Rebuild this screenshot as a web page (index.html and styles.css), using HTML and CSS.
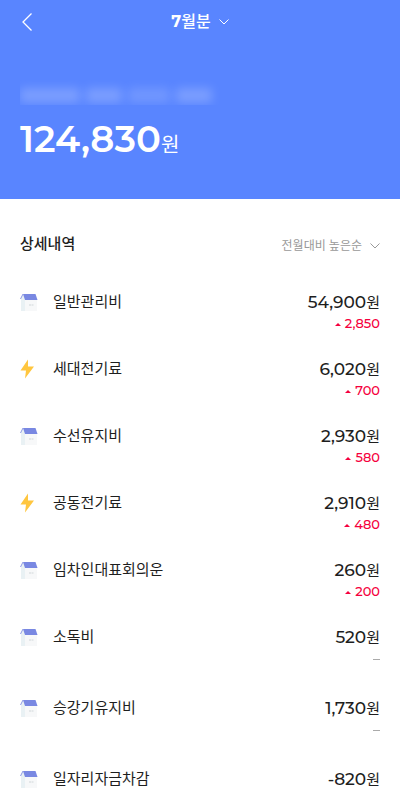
FILE: index.html
```html
<!DOCTYPE html>
<html lang="ko">
<head>
<meta charset="utf-8">
<meta name="viewport" content="width=device-width, initial-scale=1">
<title>7월분 관리비</title>
<link rel="stylesheet" href="styles.css">
</head>
<body>
<svg class="symbols" aria-hidden="true">
  <symbol id="house" viewBox="0 0 18 18">
    <path d="M1 5 3 1 5 5V18H1Z" fill="#e9f1f4"/>
    <path d="M5 5H17V18H5Z" fill="#f7f8f9"/>
    <path d="M3 1H15.500L17.500 7H5Z" fill="#7988e2"/>
    <path d="M3 1 0.500 6" stroke="#8f9be5" stroke-width="1" fill="none"/>
    <path d="M9 11H11V13H9ZM11.500 11H13.500V13H11.500Z" fill="#e4e7e9"/>
  </symbol>
  <symbol id="bolt" viewBox="0 0 18 20">
    <path d="M8 0.500 0.500 11.500H6L5 19.500 14 7.500H8Z" fill="#ffc63f"/>
  </symbol>
  <symbol id="chevron" viewBox="0 0 10 6">
    <path d="M0.500 0.500 5 5 9.500 0.500" fill="none" stroke="currentColor"/>
  </symbol>
</svg>
<header class="summary">
  <div class="topbar">
    <button class="back" type="button" aria-label="뒤로">
      <svg viewBox="0 0 10 18"><path d="M9.500 0.500 1 9 9.500 17.500" fill="none" stroke="currentColor" stroke-width="1.300"/></svg>
    </button>
    <button class="month" type="button"><span>7<span class="month-unit">월분</span></span> <svg class="chevron"><use href="#chevron"/></svg></button>
  </div>
  <div class="address" aria-hidden="true">
    <span class="smudge wide"></span><span class="smudge"></span><span class="smudge faint"></span><span class="smudge"></span>
  </div>
  <p class="total">124,830<span class="total-unit">원</span></p>
</header>
<main class="details">
  <div class="details-head">
    <h1 class="title">상세내역</h1>
    <button class="sort" type="button">전월대비 높은순 <svg class="chevron"><use href="#chevron"/></svg></button>
  </div>
  <ul class="list">
    <li class="item"><svg class="icon"><use href="#house"/></svg><span class="name">일반관리비</span><span class="amount">54,900<span class="won">원</span></span><span class="change">2,850</span></li>
    <li class="item"><svg class="icon bolt"><use href="#bolt"/></svg><span class="name">세대전기료</span><span class="amount">6,020<span class="won">원</span></span><span class="change">700</span></li>
    <li class="item"><svg class="icon"><use href="#house"/></svg><span class="name">수선유지비</span><span class="amount">2,930<span class="won">원</span></span><span class="change">580</span></li>
    <li class="item"><svg class="icon bolt"><use href="#bolt"/></svg><span class="name">공동전기료</span><span class="amount">2,910<span class="won">원</span></span><span class="change">480</span></li>
    <li class="item"><svg class="icon"><use href="#house"/></svg><span class="name">임차인대표회의운</span><span class="amount">260<span class="won">원</span></span><span class="change">200</span></li>
    <li class="item"><svg class="icon"><use href="#house"/></svg><span class="name">소독비</span><span class="amount">520<span class="won">원</span></span><span class="same"></span></li>
    <li class="item"><svg class="icon"><use href="#house"/></svg><span class="name">승강기유지비</span><span class="amount">1,730<span class="won">원</span></span><span class="same"></span></li>
    <li class="item"><svg class="icon"><use href="#house"/></svg><span class="name">일자리자금차감</span><span class="amount">-820<span class="won">원</span></span></li>
  </ul>
</main>
</body>
</html>
```
FILE: styles.css
```css
* {
  box-sizing: border-box;
}

body {
  margin: 0;
  background: #fff;
  color: #1e1e1e;
  font-family: Montserrat, Inter, "Noto Sans CJK KR", sans-serif;
}

button {
  border: 0;
  padding: 0;
  background: none;
  font: inherit;
}

.symbols {
  display: none;
}

.summary {
  padding: 0 20px 37px;
  background: #5985ff;
  color: #fff;
}

.topbar {
  display: grid;
  grid-template-columns: 20px 1fr 20px;
  align-items: center;
  height: 44px;
}

.back {
  height: 44px;
  color: #fff;
}

.back svg {
  display: block;
  width: 14px;
  height: 18px;
}

.month {
  display: flex;
  align-items: center;
  justify-content: center;
  gap: 8px;
  height: 44px;
  color: #fff;
  font-size: 16px;
  font-weight: 700;
  line-height: 24px;
}

.month-unit {
  font-weight: 500;
}

.chevron {
  width: 10px;
  height: 6px;
}

.address {
  display: flex;
  gap: 6px;
  height: 25px;
  margin-top: 36px;
  padding-top: 8px;
  overflow: hidden;
}

.smudge {
  width: 36px;
  height: 15px;
  border-radius: 4px;
  background: #fff;
  opacity: 0.2;
  filter: blur(5px);
}

.smudge.wide {
  width: 60px;
}

.smudge.faint {
  width: 42px;
  opacity: 0.14;
}

.total {
  margin: 11px 0 0;
  font-size: 37px;
  font-weight: 600;
  line-height: 46px;
}

.total-unit {
  font-size: 20px;
  font-weight: 400;
  line-height: 1;
}

.details {
  padding: 33px 20px 0;
}

.details-head {
  display: flex;
  align-items: flex-end;
  justify-content: space-between;
  height: 26px;
}

.title {
  align-self: flex-start;
  margin: 0;
  font-size: 15px;
  font-weight: 500;
  line-height: 24px;
}

.sort {
  display: flex;
  align-items: center;
  gap: 8px;
  color: #999;
  font-size: 12px;
  line-height: 24px;
}

.list {
  margin: 0;
  padding: 32px 0 0;
  list-style: none;
}

.item {
  display: grid;
  grid-template-columns: 18px 1fr auto;
  column-gap: 15px;
  align-items: center;
  padding-bottom: 25px;
}

.item:last-child {
  padding-bottom: 7px;
}

.icon {
  width: 18px;
  height: 18px;
}

.icon.bolt {
  height: 20px;
}

.name {
  font-size: 15px;
  line-height: 24px;
}

.amount {
  text-align: right;
  font-size: 17px;
  font-weight: 500;
  line-height: 24px;
}

.won {
  font-size: 15px;
  font-weight: 400;
  line-height: 1;
}

.change {
  display: flex;
  grid-column: 3;
  align-items: center;
  justify-content: flex-end;
  gap: 4px;
  color: #f5003d;
  font-size: 13px;
  font-weight: 500;
  line-height: 18px;
}

.change::before {
  content: "";
  margin-top: 2px;
  border: solid transparent;
  border-width: 0 3px 3px;
  border-bottom-color: #f5003d;
}

.same {
  grid-column: 3;
  justify-self: end;
  width: 7px;
  height: 1px;
  margin: 10px 0 11px;
  background: #aaa;
}
```
